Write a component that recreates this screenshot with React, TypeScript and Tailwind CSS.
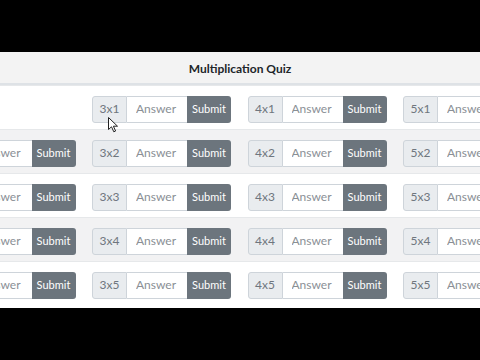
import React from "react";

const font = { fontFamily: 'Lato, "Open Sans", Arial, sans-serif' };

const rows = [1, 2, 3, 4, 5];
const tables = [2, 3, 4, 5];

function QuizGroup({ a, b }: { a: number; b: number }) {
  return (
    <div className="flex h-[27px] w-[139px] shrink-0 text-[12px]">
      <span className="flex w-[35px] items-center justify-center rounded-l-[3px] border border-[#ced4da] bg-[#e9ecef] text-[#6f767e]">
        {a}x{b}
      </span>
      <input
        placeholder="Answer"
        className="w-[60px] border-y border-[#ced4da] bg-white pl-[9px] text-[12px] text-[#495057] outline-none placeholder:text-[#8a8f95]"
        style={font}
      />
      <button
        className="w-[44px] rounded-r-[3px] bg-[#6c757d] text-[11px] text-white"
        style={font}
      >
        Submit
      </button>
    </div>
  );
}

export default function App() {
  return (
    <div className="relative h-[360px] w-[480px] overflow-hidden bg-black" style={font}>
      <div className="mt-[52px] h-[256px] overflow-hidden bg-white">
        <div className="flex h-[33px] items-center justify-center border-b-2 border-[#dee2e6] bg-[#f3f3f3] pt-[2px] text-[12px] font-bold text-[#212529]">
          Multiplication Quiz
        </div>
        {rows.map(r => (
          <div
            key={r}
            className={`flex h-[44px] items-center gap-[16.5px] border-t border-[#e6e8ea] ml-[-63.5px] pt-[3px] ${
              r % 2 === 0 ? "bg-[#f2f2f3]" : "bg-white"
            }`}
          >
            {tables.map(t =>
              t === 2 && r === 1 ? (
                <div key={t} className="w-[139px] shrink-0" />
              ) : (
                <QuizGroup key={t} a={t} b={r} />
              )
            )}
          </div>
        ))}
      </div>

      {/* mouse pointer */}
      <svg
        className="absolute left-[108px] top-[117px]"
        width="11"
        height="16"
        viewBox="0 0 11 16"
      >
        <path
          d="M0.5 0.5 L0.5 12.5 L3.5 9.8 L5.8 14.8 L7.6 14 L5.4 9.2 L9.5 9.2 Z"
          fill="white"
          stroke="#222"
          strokeWidth="1"
          strokeLinejoin="round"
        />
      </svg>
    </div>
  );
}
